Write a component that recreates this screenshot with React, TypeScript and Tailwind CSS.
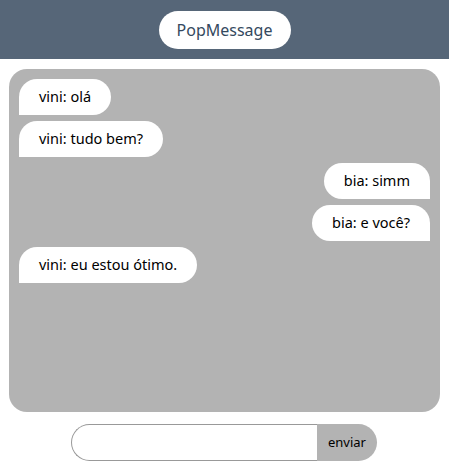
const messages = [
  { id: 1, from: "vini", text: "olá", mine: false },
  { id: 2, from: "vini", text: "tudo bem?", mine: false },
  { id: 3, from: "bia", text: "simm", mine: true },
  { id: 4, from: "bia", text: "e você?", mine: true },
  { id: 5, from: "vini", text: "eu estou ótimo.", mine: false },
];

export default function App() {
  return (
    <div className="w-[449px] h-[472px] bg-white flex flex-col font-['Noto_Sans',sans-serif]">
      {/* Header */}
      <div className="h-[59px] bg-[#566678] flex items-center justify-center shrink-0">
        <div className="w-[132px] h-[38px] bg-white rounded-full flex items-center justify-center text-[16px] text-[#34495e]">
          PopMessage
        </div>
      </div>

      {/* Chat */}
      <div className="mx-[9px] mt-[10px] h-[343px] bg-[#b3b3b3] rounded-[18px] p-[10px] flex flex-col gap-[6px]">
        {messages.map((m) =>
          m.mine ? (
            <div key={m.id} className="flex justify-end">
              <div className="h-[36px] px-[20px] bg-white rounded-t-[18px] rounded-bl-[18px] flex items-center text-[14.5px] text-black">
                {m.from}: {m.text}
              </div>
            </div>
          ) : (
            <div key={m.id} className="flex justify-start">
              <div className="h-[36px] px-[20px] bg-white rounded-t-[18px] rounded-br-[18px] flex items-center text-[14.5px] text-black">
                {m.from}: {m.text}
              </div>
            </div>
          )
        )}
      </div>

      {/* Input */}
      <div className="flex justify-center mt-[12px] pr-[1px]">
        <input className="w-[246px] h-[37px] border border-[#999] border-r-0 rounded-l-full bg-white px-4 outline-none" />
        <button className="w-[60px] h-[37px] bg-[#b3b3b3] rounded-r-full text-[13px] text-black">enviar</button>
      </div>
    </div>
  );
}
